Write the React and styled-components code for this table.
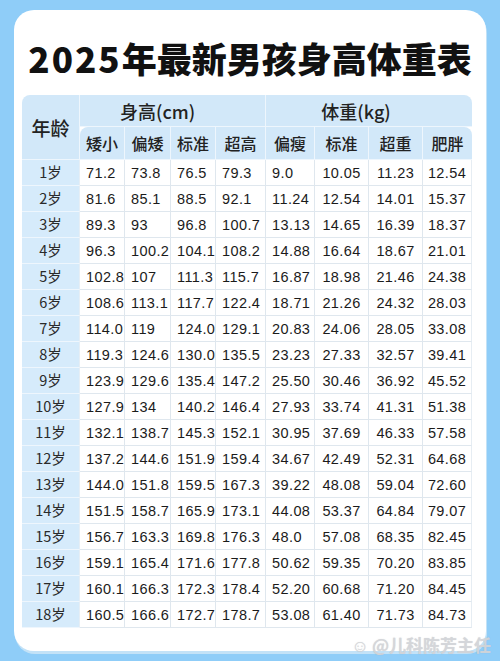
import React from 'react';
import styled, { createGlobalStyle } from 'styled-components';

const GlobalStyle = createGlobalStyle`
  html, body {
    margin: 0;
    padding: 0;
    background: #8fcdf8;
  }
`
const Page = styled.div`
  width: 500px;
  height: 661px;
  box-sizing: border-box;
  padding: 10px 14px 10px 14px;
  background: #8fcdf8;
  position: relative;
  overflow: hidden;
`
const Card = styled.div`
  height: 641px;
  background: #fff;
  border-radius: 20px;
  box-shadow: 1px 3px 0 #c3e2f7;
  box-sizing: border-box;
  padding: 28px 0 0 8px;
  display: flex;
  flex-direction: column;
`
const Title = styled.h1`
  margin: 0;
  height: 57px;
  padding-right: 8px;
  text-align: center;
  white-space: nowrap;
  font-family: "Noto Sans CJK SC", sans-serif;
  font-weight: 900;
  font-size: 35px;
  line-height: 40px;
  color: #111;
`
const Digits = styled.span`
  letter-spacing: 2px;
`
const Table = styled.table`
  width: 450px;
  table-layout: fixed;
  border-collapse: separate;
  border-spacing: 0;
  font-family: "Liberation Sans", "Noto Sans CJK SC", sans-serif;
  color: #1b1b1b;
`
const HeadCell = styled.th`
  background: #d2e8f9;
  border-right: 1px solid #eef6fd;
  border-bottom: 1px solid #eef6fd;
  font-family: "Noto Sans CJK SC", sans-serif;
  font-weight: 500;
  font-size: ${p => p.$size || 16}px;
  height: ${p => p.$h || 32}px;
  padding: 0 ${p => p.$pr || 0}px 0 0;
  text-align: center;
  box-sizing: border-box;
  color: #222;
  &:first-child { border-top-left-radius: 8px; }
  &:last-child { border-top-right-radius: 8px; border-right: none; }
`
const AgeCell = styled.td`
  background: #d6ebfb;
  border-right: 1px solid #e6eef5;
  border-bottom: 1px solid #eef6fd;
  height: 26px;
  box-sizing: border-box;
  text-align: center;
  vertical-align: middle;
  font-family: "Noto Sans CJK SC", sans-serif;
  font-size: 14.5px;
  color: #2a2a2a;
  padding: 0 0 3px 0;
`
const Cell = styled.td`
  background: #fff;
  border-right: 1px solid #dfe7ee;
  border-bottom: 1px solid #dfe7ee;
  height: 26px;
  box-sizing: border-box;
  font-size: 14.5px;
  letter-spacing: 0.4px;
  text-align: ${p => (p.$center ? 'center' : 'left')};
  padding: 1px 0 0 ${p => (p.$center ? 0 : 6)}px;
  white-space: nowrap;
  &:last-child { border-right: 1px solid #e6edf3; }
`
const Watermark = styled.div`
  position: absolute;
  right: 9px;
  bottom: 4px;
  display: flex;
  align-items: center;
  gap: 3px;
  font-family: "Noto Sans CJK SC", sans-serif;
  font-size: 17px;
  font-weight: 700;
  color: rgba(212, 214, 218, 0.92);
  text-shadow: 0 0 1px rgba(150, 150, 150, 0.35);
`

const widths = [58, 45, 46, 45, 50, 49, 54, 54, 49];
const subHeads = ['矮小', '偏矮', '标准', '超高', '偏瘦', '标准', '超重', '肥胖'];

const rows = [
  ['1岁', '71.2', '73.8', '76.5', '79.3', '9.0', '10.05', '11.23', '12.54'],
  ['2岁', '81.6', '85.1', '88.5', '92.1', '11.24', '12.54', '14.01', '15.37'],
  ['3岁', '89.3', '93', '96.8', '100.7', '13.13', '14.65', '16.39', '18.37'],
  ['4岁', '96.3', '100.2', '104.1', '108.2', '14.88', '16.64', '18.67', '21.01'],
  ['5岁', '102.8', '107', '111.3', '115.7', '16.87', '18.98', '21.46', '24.38'],
  ['6岁', '108.6', '113.1', '117.7', '122.4', '18.71', '21.26', '24.32', '28.03'],
  ['7岁', '114.0', '119', '124.0', '129.1', '20.83', '24.06', '28.05', '33.08'],
  ['8岁', '119.3', '124.6', '130.0', '135.5', '23.23', '27.33', '32.57', '39.41'],
  ['9岁', '123.9', '129.6', '135.4', '147.2', '25.50', '30.46', '36.92', '45.52'],
  ['10岁', '127.9', '134', '140.2', '146.4', '27.93', '33.74', '41.31', '51.38'],
  ['11岁', '132.1', '138.7', '145.3', '152.1', '30.95', '37.69', '46.33', '57.58'],
  ['12岁', '137.2', '144.6', '151.9', '159.4', '34.67', '42.49', '52.31', '64.68'],
  ['13岁', '144.0', '151.8', '159.5', '167.3', '39.22', '48.08', '59.04', '72.60'],
  ['14岁', '151.5', '158.7', '165.9', '173.1', '44.08', '53.37', '64.84', '79.07'],
  ['15岁', '156.7', '163.3', '169.8', '176.3', '48.0', '57.08', '68.35', '82.45'],
  ['16岁', '159.1', '165.4', '171.6', '177.8', '50.62', '59.35', '70.20', '83.85'],
  ['17岁', '160.1', '166.3', '172.3', '178.4', '52.20', '60.68', '71.20', '84.45'],
  ['18岁', '160.5', '166.6', '172.7', '178.7', '53.08', '61.40', '71.73', '84.73'],
];

function App () {
  return (
    <Page>
      <GlobalStyle />
      <Card>
        <Title><Digits>2025</Digits>年最新男孩身高体重表</Title>
        <Table>
          <colgroup>
            {widths.map((w, i) => <col key={i} style={{ width: w }} />)}
          </colgroup>
          <thead>
            <tr>
              <HeadCell rowSpan={2} $size={19} $h={32}>年龄</HeadCell>
              <HeadCell colSpan={4} $size={18} $pr={30}>身高(cm)</HeadCell>
              <HeadCell colSpan={4} $size={18} $pr={26}>体重(kg)</HeadCell>
            </tr>
            <tr>
              {subHeads.map((h, i) => <HeadCell key={i} $h={33}>{h}</HeadCell>)}
            </tr>
          </thead>
          <tbody>
            {rows.map(r => (
              <tr key={r[0]}>
                <AgeCell>{r[0]}</AgeCell>
                {r.slice(1).map((v, i) => (
                  <Cell key={i} $center={i >= 5}>{v}</Cell>
                ))}
              </tr>
            ))}
          </tbody>
        </Table>
      </Card>
      <Watermark>
        <span>☺</span>
        <span>@儿科陈芳主任</span>
      </Watermark>
    </Page>
  )
}

export default App;
